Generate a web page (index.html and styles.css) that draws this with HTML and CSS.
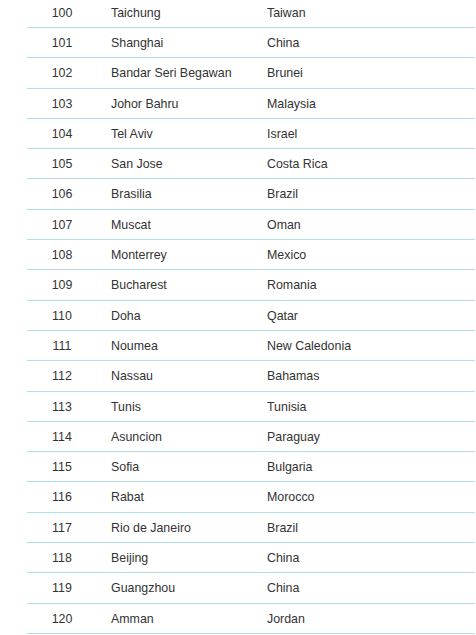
FILE: index.html
```html
<!DOCTYPE html>
<html>
<head>
<meta charset="utf-8">
<link rel="stylesheet" href="styles.css">
</head>
<body>
<div class="list">
  <div class="row"><span class="num">100</span><span class="city">Taichung</span><span class="country">Taiwan</span></div>
  <div class="row"><span class="num">101</span><span class="city">Shanghai</span><span class="country">China</span></div>
  <div class="row"><span class="num">102</span><span class="city">Bandar Seri Begawan</span><span class="country">Brunei</span></div>
  <div class="row"><span class="num">103</span><span class="city">Johor Bahru</span><span class="country">Malaysia</span></div>
  <div class="row"><span class="num">104</span><span class="city">Tel Aviv</span><span class="country">Israel</span></div>
  <div class="row"><span class="num">105</span><span class="city">San Jose</span><span class="country">Costa Rica</span></div>
  <div class="row"><span class="num">106</span><span class="city">Brasilia</span><span class="country">Brazil</span></div>
  <div class="row"><span class="num">107</span><span class="city">Muscat</span><span class="country">Oman</span></div>
  <div class="row"><span class="num">108</span><span class="city">Monterrey</span><span class="country">Mexico</span></div>
  <div class="row"><span class="num">109</span><span class="city">Bucharest</span><span class="country">Romania</span></div>
  <div class="row"><span class="num">110</span><span class="city">Doha</span><span class="country">Qatar</span></div>
  <div class="row"><span class="num">111</span><span class="city">Noumea</span><span class="country">New Caledonia</span></div>
  <div class="row"><span class="num">112</span><span class="city">Nassau</span><span class="country">Bahamas</span></div>
  <div class="row"><span class="num">113</span><span class="city">Tunis</span><span class="country">Tunisia</span></div>
  <div class="row"><span class="num">114</span><span class="city">Asuncion</span><span class="country">Paraguay</span></div>
  <div class="row"><span class="num">115</span><span class="city">Sofia</span><span class="country">Bulgaria</span></div>
  <div class="row"><span class="num">116</span><span class="city">Rabat</span><span class="country">Morocco</span></div>
  <div class="row"><span class="num">117</span><span class="city">Rio de Janeiro</span><span class="country">Brazil</span></div>
  <div class="row"><span class="num">118</span><span class="city">Beijing</span><span class="country">China</span></div>
  <div class="row"><span class="num">119</span><span class="city">Guangzhou</span><span class="country">China</span></div>
  <div class="row"><span class="num">120</span><span class="city">Amman</span><span class="country">Jordan</span></div>
</div>
</body>
</html>
```
FILE: styles.css
```css
html, body {
  margin: 0;
  padding: 0;
  background: #ffffff;
  overflow: hidden;
}
.list {
  margin: -2.3px 0 0 27px;
  width: 448px;
  font-family: "Liberation Sans", Arial, sans-serif;
  font-size: 12.4px;
  color: #333;
}
.row {
  display: grid;
  grid-template-columns: 70px 156px 1fr;
  box-sizing: border-box;
  height: 30.3px;
  line-height: 31px;
  border-bottom: 1px solid #b0e0e6;
}
.num {
  text-align: center;
}
.city, .country {
  padding-left: 14px;
  white-space: nowrap;
}
```
